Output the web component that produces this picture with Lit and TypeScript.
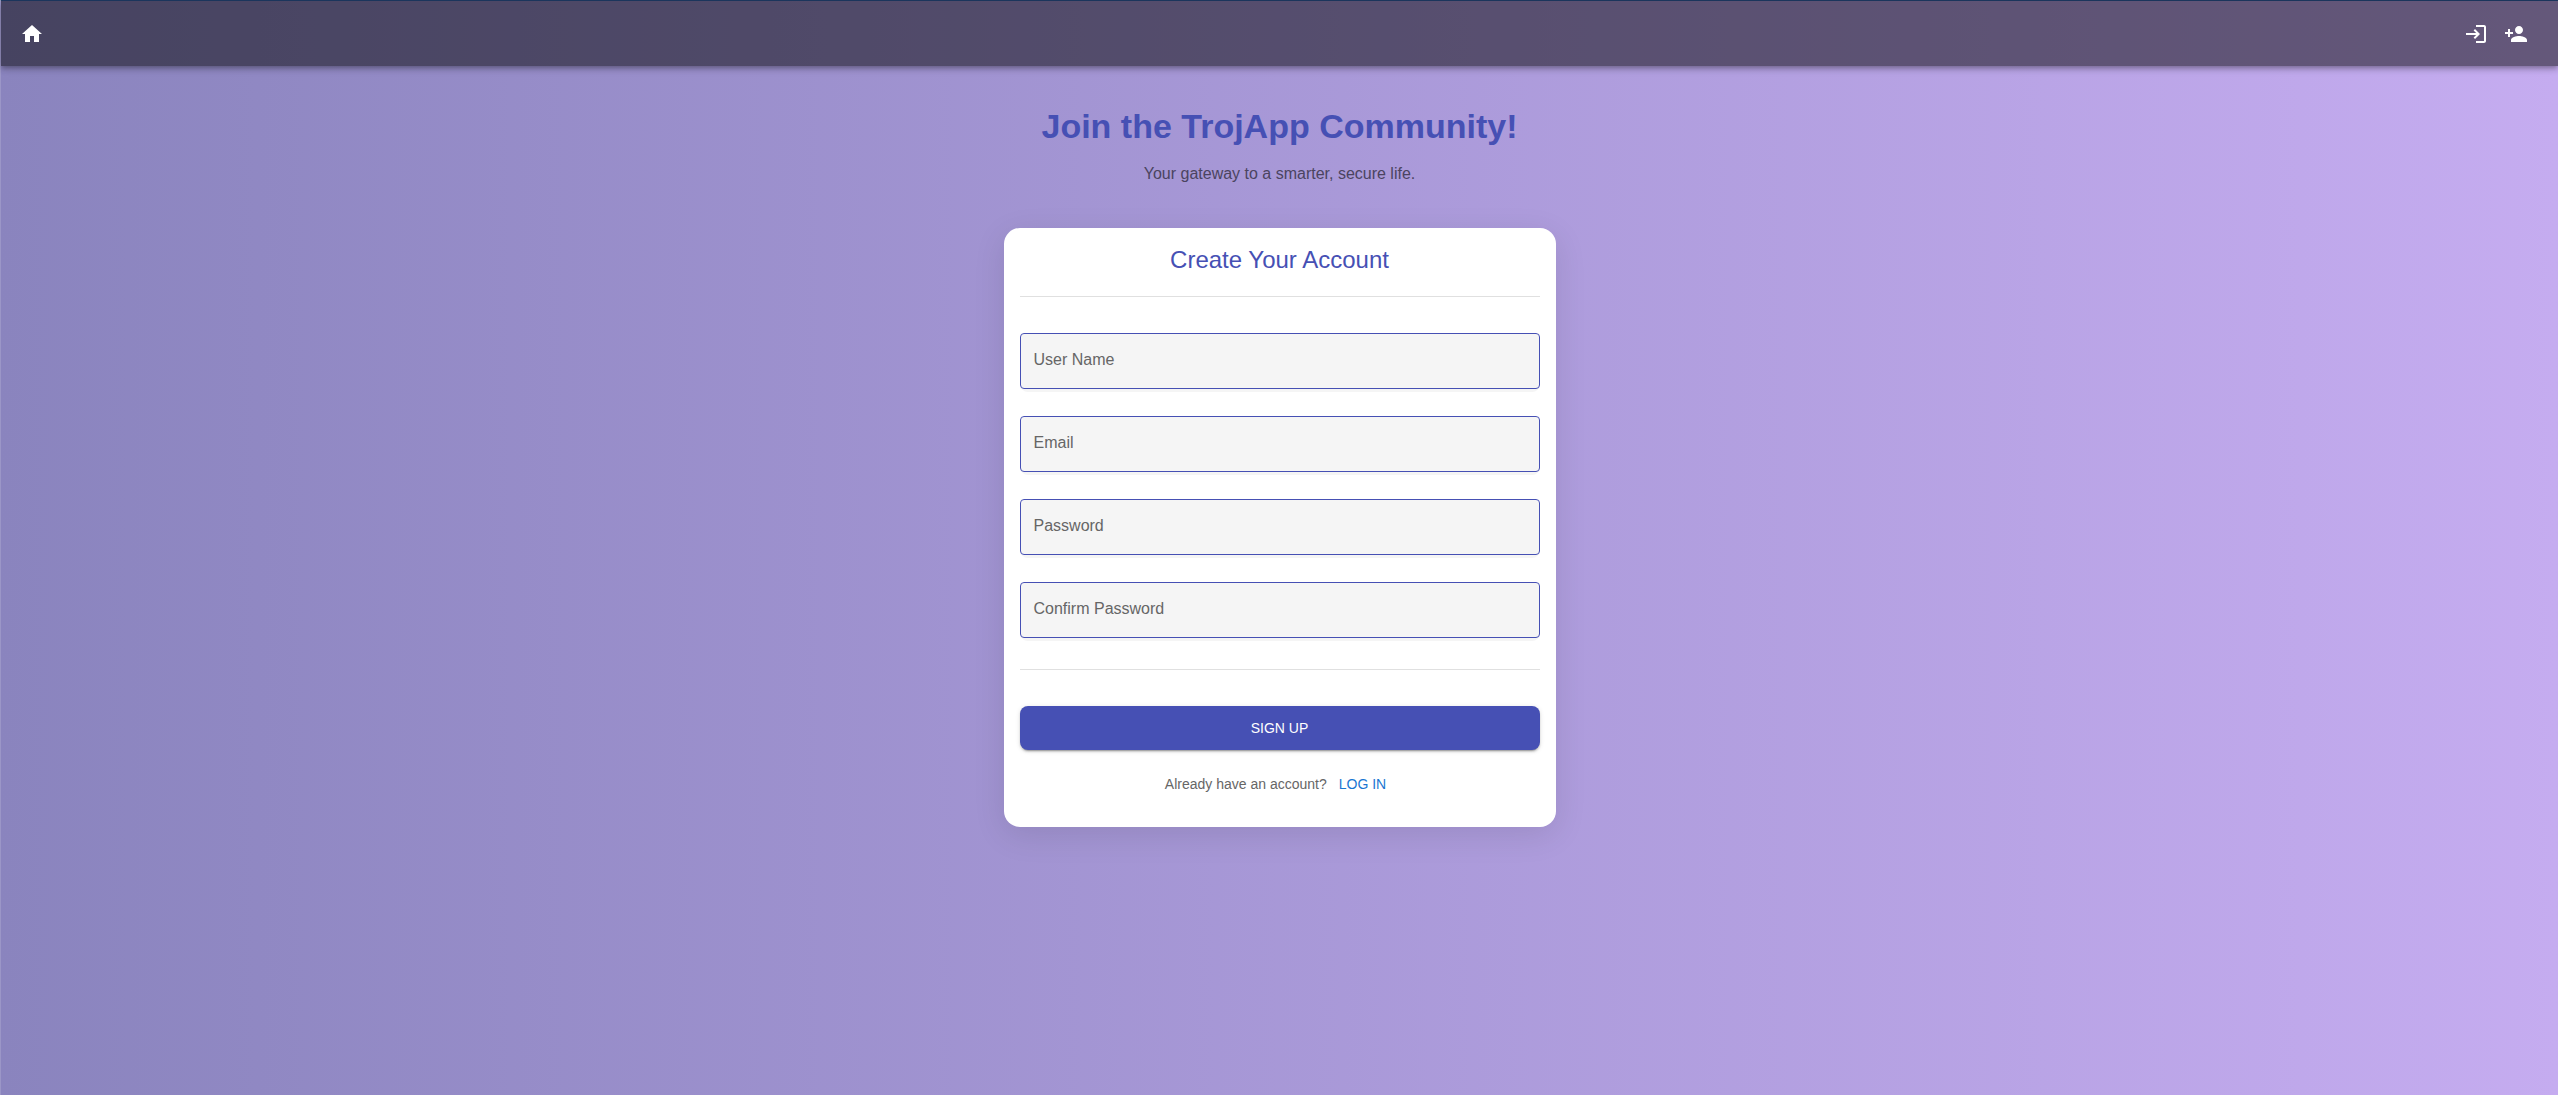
import { LitElement, html, css, svg } from "lit";
import { customElement } from "lit/decorators.js";

const ICONS = {
  home: svg`<path d="M10 20v-6h4v6h5v-8h3L12 3 2 12h3v8z" />`,
  login: svg`<path d="M11 7 9.6 8.4l2.6 2.6H2v2h10.2l-2.6 2.6L11 17l5-5-5-5zm9 12h-8v2h8c1.1 0 2-.9 2-2V5c0-1.1-.9-2-2-2h-8v2h8v14z" />`,
  personAdd: svg`<path d="M15 12c2.21 0 4-1.79 4-4s-1.79-4-4-4-4 1.79-4 4 1.79 4 4 4zm-9-2V7H4v3H1v2h3v3h2v-3h3v-2H6zm9 4c-2.67 0-8 1.34-8 4v2h16v-2c0-2.66-5.33-4-8-4z" />`,
};

const icon = (name: keyof typeof ICONS) =>
  html`<svg class="icon" viewBox="0 0 24 24" aria-hidden="true">${ICONS[name]}</svg>`;

@customElement("nav-bar")
class NavBar extends LitElement {
  static styles = css`
    :host {
      display: flex;
      align-items: center;
      justify-content: space-between;
      height: 64px;
      padding: 1px 22px 0 11px;
      background: rgba(0, 0, 0, 0.49);
      box-shadow:
        0 2px 4px -1px rgba(0, 0, 0, 0.2),
        0 4px 5px rgba(0, 0, 0, 0.14),
        0 1px 10px rgba(0, 0, 0, 0.12);
    }
    .group {
      display: flex;
    }
    .link {
      display: flex;
      padding: 8px;
      color: #fff;
    }
    .icon {
      width: 24px;
      height: 24px;
      fill: currentColor;
    }
  `;

  render() {
    return html`
      <a class="link" href="#home" aria-label="Home">${icon("home")}</a>
      <nav class="group">
        <a class="link" href="#login" aria-label="Log in">${icon("login")}</a>
        <a class="link" href="#signup" aria-label="Sign up">${icon("personAdd")}</a>
      </nav>
    `;
  }
}

interface Field {
  id: string;
  label: string;
  type: string;
}

const FIELDS: Field[] = [
  { id: "username", label: "User Name", type: "text" },
  { id: "email", label: "Email", type: "email" },
  { id: "password", label: "Password", type: "password" },
  { id: "confirm", label: "Confirm Password", type: "password" },
];

@customElement("signup-card")
class SignupCard extends LitElement {
  static styles = css`
    :host {
      display: block;
      box-sizing: border-box;
      padding: 16px;
      border-radius: 16px;
      background: #fff;
      box-shadow: 0 8px 32px rgba(0, 0, 0, 0.1);
    }
    .title {
      margin: 0 0 20px;
      text-align: center;
      font-size: 24px;
      font-weight: 400;
      line-height: 32px;
      color: #4650b4;
    }
    .rule {
      height: 1px;
      margin: 0;
      border: 0;
      background: #e0e0e0;
    }
    .fields {
      display: flex;
      flex-direction: column;
      gap: 24px;
      padding: 36px 0 28px;
    }
    .field {
      display: grid;
      padding-bottom: 3px;
      border-radius: 8px;
      background: #f5f5f5;
    }
    .label {
      grid-area: 1 / 1;
      padding: 15px 14px;
      font-size: 16px;
      line-height: 24px;
      color: #666;
      pointer-events: none;
      z-index: 1;
    }
    .input {
      grid-area: 1 / 1;
      box-sizing: border-box;
      width: 100%;
      height: 56px;
      padding: 0 13px;
      border: 1px solid #4650b4;
      border-radius: 4px;
      background: transparent;
      font: inherit;
      font-size: 16px;
    }
    .input:not(:placeholder-shown) + .label {
      visibility: hidden;
    }
    .submit {
      display: block;
      width: 100%;
      height: 44px;
      margin-top: 36px;
      border: 0;
      border-radius: 8px;
      background: #4650b4;
      color: #fff;
      font: inherit;
      font-size: 14px;
      text-transform: uppercase;
      box-shadow:
        0 3px 1px -2px rgba(0, 0, 0, 0.2),
        0 2px 2px rgba(0, 0, 0, 0.14),
        0 1px 5px rgba(0, 0, 0, 0.12);
    }
    .footer {
      display: flex;
      justify-content: center;
      align-items: baseline;
      gap: 12px;
      padding: 24px 8px 16px 0;
      font-size: 14px;
      line-height: 21px;
      color: #666;
    }
    .login {
      color: #1976d2;
      text-decoration: none;
      text-transform: uppercase;
    }
  `;

  render() {
    return html`
      <form>
        <h2 class="title">Create Your Account</h2>
        <hr class="rule" />
        <div class="fields">
          ${FIELDS.map(
            (f) => html`
              <div class="field">
                <input class="input" id=${f.id} type=${f.type} placeholder=" " />
                <label class="label" for=${f.id}>${f.label}</label>
              </div>
            `,
          )}
        </div>
        <hr class="rule" />
        <button class="submit" type="button">Sign Up</button>
        <div class="footer">
          <span>Already have an account?</span>
          <a class="login" href="#login">Log In</a>
        </div>
      </form>
    `;
  }
}

@customElement("app-root")
class AppRoot extends LitElement {
  static styles = css`
    :host {
      display: block;
      box-sizing: border-box;
      min-height: 100vh;
      border-top: 1px solid #1f3a63;
      border-left: 1px solid rgba(255, 255, 255, 0.15);
      background: linear-gradient(to right, #8a84be, #c5acf0) border-box;
      font-family: "Liberation Sans", Arial, sans-serif;
    }
    .page {
      display: flex;
      flex-direction: column;
      max-width: 552px;
      margin: 0 auto;
      padding: 40px 24px;
    }
    .heading {
      margin: 0;
      text-align: center;
      font-size: 34px;
      line-height: 40px;
      font-weight: 700;
      color: #4650b4;
    }
    .tagline {
      margin: 16px 0 42px;
      text-align: center;
      font-size: 16px;
      line-height: 24px;
      color: #4b4460;
    }
  `;

  render() {
    return html`
      <nav-bar></nav-bar>
      <main class="page">
        <h1 class="heading">Join the TrojApp Community!</h1>
        <p class="tagline">Your gateway to a smarter, secure life.</p>
        <signup-card></signup-card>
      </main>
    `;
  }
}
